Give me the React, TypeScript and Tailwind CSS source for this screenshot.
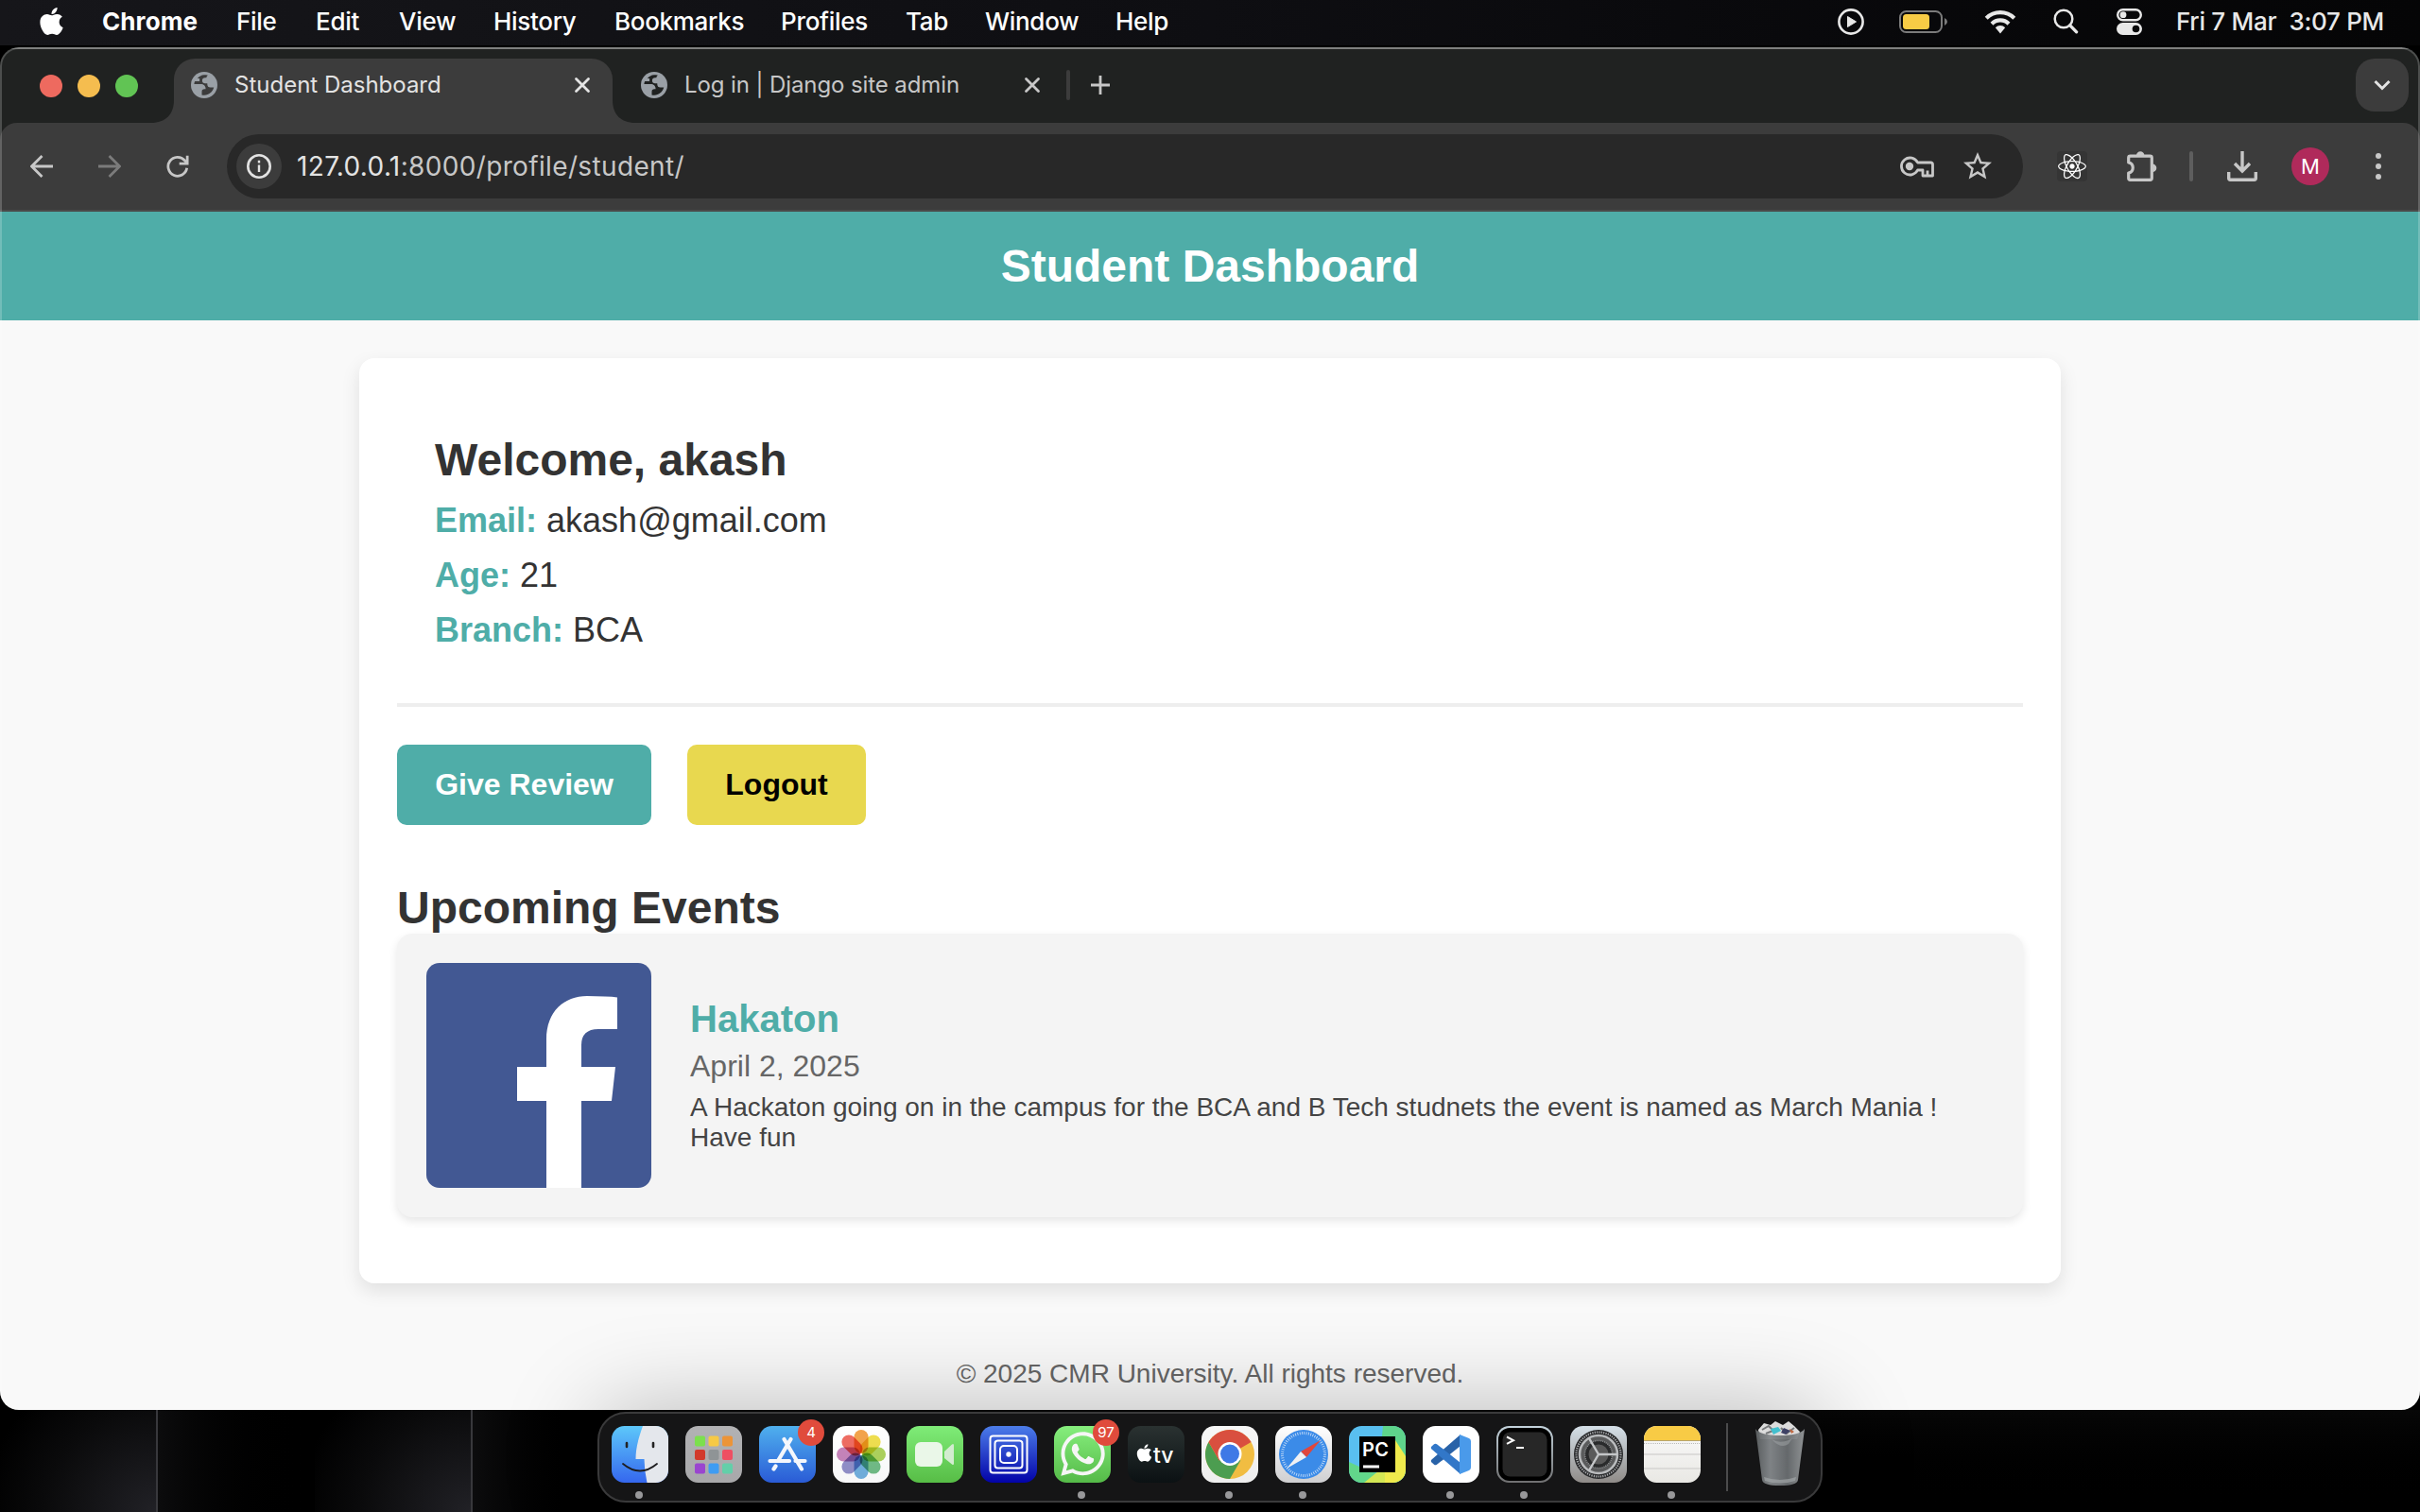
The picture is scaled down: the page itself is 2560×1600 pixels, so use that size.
import { useId } from "react";
import type { ReactNode } from "react";
import { FaApple, FaWhatsapp, FaReact } from "react-icons/fa";
import { MdOutlineStarBorder } from "react-icons/md";

const menus: { label: string; x: string }[] = [
  { label: "File", x: "w-[84px]" },
  { label: "Edit", x: "w-[88px]" },
  { label: "View", x: "w-[100px]" },
  { label: "History", x: "w-[128px]" },
  { label: "Bookmarks", x: "w-[176px]" },
  { label: "Profiles", x: "w-[132px]" },
  { label: "Tab", x: "w-[84px]" },
  { label: "Window", x: "w-[138px]" },
  { label: "Help", x: "w-[100px]" },
];

function MenuBar() {
  return (
    <div className="flex h-12 items-center bg-gradient-to-r from-[#16161a] via-[#0e0e12] to-[#050506] pb-[3px] text-[26px] font-medium tracking-[-0.3px] text-white">
      <div className="flex w-[108px] shrink-0 pl-[38px]">
        <FaApple size={33} />
      </div>
      <div className="w-[142px] shrink-0 font-bold tracking-[0.1px]">Chrome</div>
      {menus.map((m) => (
        <div key={m.label} className={`${m.x} shrink-0 whitespace-nowrap`}>{m.label}</div>
      ))}
      <div className="ml-auto flex items-center pr-[39px] text-[#e8e8e8]">
        <svg className="mr-[37px]" width="28" height="28" viewBox="0 0 28 28" fill="none">
          <circle cx="14" cy="14" r="12.600" stroke="currentColor" strokeWidth="2.600" />
          <path d="M10.500 8.500v11l9-5.500z" fill="currentColor" stroke="currentColor" strokeLinejoin="round" />
        </svg>
        <svg className="mr-[38px]" width="52" height="24" viewBox="0 0 52 24" fill="none">
          <rect x="1" y="1" width="44" height="22" rx="6.500" stroke="#7b7b7b" strokeWidth="2" />
          <rect x="4" y="4" width="28" height="16" rx="3.500" fill="#f8cc45" />
          <path d="M48 8q3 1.500 3 4t-3 4z" fill="#7b7b7b" />
        </svg>
        <svg className="mr-[39px]" width="34" height="26" viewBox="0 0 34 26" fill="none">
          <path d="M2.200 9.200a21 21 0 0 1 29.600 0M8 15.200a12.700 12.700 0 0 1 18 0" stroke="currentColor" strokeWidth="4.200" />
          <path d="M11.800 19.200a7.400 7.400 0 0 1 10.400 0L17 25.500z" fill="currentColor" />
        </svg>
        <svg className="mr-[40px]" width="27" height="27" viewBox="0 0 27 27" fill="none" stroke="currentColor">
          <circle cx="11" cy="11" r="9.300" strokeWidth="2.500" />
          <path d="M17.800 17.800l6.800 7" strokeWidth="3.300" strokeLinecap="round" />
        </svg>
        <svg className="mr-[36px]" width="27" height="28" viewBox="0 0 27 28" fill="none">
          <rect x="1.200" y="1.200" width="24.600" height="11" rx="5.500" stroke="currentColor" strokeWidth="2.400" />
          <circle cx="7" cy="6.700" r="3.400" fill="currentColor" />
          <rect x="0" y="15" width="27" height="13" rx="6.500" fill="currentColor" />
          <circle cx="20.500" cy="21.500" r="3.800" fill="#080809" />
        </svg>
        <div className="w-[219px] whitespace-pre tracking-[-0.3px]">Fri 7 Mar  3:07 PM</div>
      </div>
    </div>
  );
}

function Close({ className }: { className: string }) {
  return (
    <svg className={className} width="18" height="18" viewBox="0 0 18 18" stroke="currentColor" strokeWidth="2.800" strokeLinecap="round">
      <path d="M2.500 2.500l13 13M15.500 2.500l-13 13" />
    </svg>
  );
}

function Globe({ className }: { className: string }) {
  return (
    <svg className={className} width="28" height="28" viewBox="0 0 28 28" fill="none">
      <circle cx="14" cy="14" r="14" fill="#9aa0a6" />
      <path d="M3.400 13h7c3 0 5.100 1.800 5.100 4.500v.8h-1.300c-1.800 0-2.700 1-2.700 2.600v3.600c.8.200 1.700.3 2.500.3 5-.1 9-3.600 10.200-8.300h-3.500c-2.200 0-3.400-1.300-3.400-3.300v-.9h-2.200c-2 0-3.200-1.200-3.200-3 0-1.900 1.200-3 3.200-3h1.300c0-1.300.6-2 1.600-2.500-1.300-.4-2.700-.5-4-.5-3 .2-5.400 1.600-7.200 3.700h2.300v3H4.200c-.5 1-.8 2-.8 3z" className="fill-current" />
    </svg>
  );
}

function TabStrip() {
  return (
    <div className="flex h-[78px] items-end bg-[#202221]">
      <div className="flex h-[78px] w-[160px] shrink-0 items-center gap-4 pl-[42px]">
        <span className="size-6 rounded-full bg-[#ee6a5f]" />
        <span className="size-6 rounded-full bg-[#f5bd4f]" />
        <span className="size-6 rounded-full bg-[#61c454]" />
      </div>
      <svg width="24" height="24" viewBox="0 0 24 24" className="shrink-0 fill-[#3c3c3c]"><path d="M0 24C15 24 24 15 24 0V24z" /></svg>
      <div className="flex h-[68px] w-[464px] shrink-0 items-center rounded-t-[22px] bg-[#3c3c3c] pb-3 pl-[18px] pr-[23px]">
        <Globe className="shrink-0 text-[#3c3c3c]" />
        <span className="ml-[18px] whitespace-nowrap text-[24px] tracking-[0px] text-[#e3e3e3]">Student Dashboard</span>
        <Close className="ml-auto shrink-0 text-[#e3e3e3]" />
      </div>
      <svg width="24" height="24" viewBox="0 0 24 24" className="shrink-0 fill-[#3c3c3c]"><path d="M24 24C9 24 0 15 0 0V24z" /></svg>
      <div className="flex h-[68px] items-center pb-3 text-[#c7c7c7]">
        <Globe className="ml-[6px] shrink-0 text-[#202221]" />
        <span className="ml-[18px] w-[359px] whitespace-nowrap text-[24px] tracking-[-0.1px]">Log in | Django site admin</span>
        <Close className="shrink-0" />
        <span className="ml-[27px] h-8 w-1 rounded-full bg-[#3c3c3c]" />
        <svg className="ml-[22px]" width="20" height="20" viewBox="0 0 20 20" stroke="currentColor" strokeWidth="2.800"><path d="M10 0v20M0 10h20" /></svg>
      </div>
      <div className="mb-3 ml-auto mr-[12px] flex size-14 items-center justify-center rounded-[20px] bg-[#3c3c3c]">
        <svg width="18" height="12" viewBox="0 0 18 12" fill="none" stroke="#e3e3e3" strokeWidth="3"><path d="M1.500 2l7.500 7.500L16.500 2" /></svg>
      </div>
    </div>
  );
}

function Toolbar() {
  return (
    <div className="bg-[#202221]">
      <div className="flex h-[94px] items-center rounded-t-[18px] border-b-2 border-[#4a4a4a] bg-[#3c3c3c] text-[#c7c7c7]">
        <svg className="ml-8 shrink-0" width="24" height="24" viewBox="0 0 24 24" fill="none" stroke="currentColor" strokeWidth="2.800"><path d="M24 12H2.500M12.500 1L1.500 12l11 11" /></svg>
        <svg className="ml-12 shrink-0 text-[#7b7b7b]" width="24" height="24" viewBox="0 0 24 24" fill="none" stroke="currentColor" strokeWidth="2.800"><path d="M0 12h21.500M11.500 1l11 11-11 11" /></svg>
        <svg className="ml-12 shrink-0" width="24" height="24" viewBox="0 0 26 26" fill="none" stroke="currentColor" strokeWidth="3"><path d="M23.500 15A10.800 10.800 0 1 1 21 6.200L23.500 9" /><path d="M24 .8V10h-9.200" /></svg>
        <div className="ml-10 flex h-[68px] w-[1900px] shrink-0 items-center rounded-full bg-[#282828] pl-[10px]">
          <div className="flex size-12 items-center justify-center rounded-full bg-[#3c3c3c]">
            <svg width="26" height="26" viewBox="0 0 26 26" fill="none" stroke="#e3e3e3"><circle cx="13" cy="13" r="11.700" strokeWidth="2.600" /><path d="M13 11.500v7.500M13 6.800v2.600" strokeWidth="2.400" /></svg>
          </div>
          <div className="ml-4 text-[28px] tracking-[0.35px]"><span className="text-[#e3e3e3]">127.0.0.1</span>:8000/profile/student/</div>
          <svg className="ml-auto mr-[28px]" width="36" height="24" viewBox="0 0 36 24" fill="none" stroke="currentColor" strokeWidth="2.800" strokeLinejoin="round">
            <path d="M18.500 8A9 9 0 1 0 18.500 16H24v6h10.500V10q0-2-2-2zM29 16.500V22" />
            <circle cx="10" cy="12" r="4.200" fill="currentColor" stroke="none" />
          </svg>
          <MdOutlineStarBorder className="mr-[30px] text-[36px]" />
        </div>
        <div className="ml-[36px] flex size-8 shrink-0 items-center justify-center rounded bg-[#353535]">
          <FaReact size={30} className="text-white" />
        </div>
        <svg className="ml-[42px] shrink-0" width="32" height="32" viewBox="0 0 32 32" fill="none">
          <path d="M1.700 7Q1.700 5.200 3.500 5.200H24.500q1.800 0 1.800 1.800V28.500q0 1.800-1.800 1.800H3.500q-1.800 0-1.800-1.800V23a5.600 5.600 0 0 0 0-11z" stroke="currentColor" strokeWidth="3.200" strokeLinejoin="round" />
          <path d="M10 4.500a4.200 4.200 0 0 1 8.400 0zM27 13.500a4.300 4.300 0 0 1 0 8.600z" fill="currentColor" />
        </svg>
        <span className="ml-[34px] h-8 w-1 shrink-0 rounded-full bg-[#5e5e5e]" />
        <svg className="ml-9 shrink-0" width="32" height="32" viewBox="0 0 32 32" fill="none" stroke="currentColor" strokeWidth="3.400"><path d="M16 0v21M8 13l8 8 8-8M1.700 22v6.500q0 1.700 1.700 1.700h25.200q1.700 0 1.700-1.700V22" /></svg>
        <div className="ml-9 flex size-10 shrink-0 items-center justify-center rounded-full bg-[#b02a5b] text-[22px] text-white">M</div>
        <div className="ml-[49px] flex flex-col gap-[5px]">
          <i className="size-1.5 rounded-full bg-[#c7c7c7]" /><i className="size-1.5 rounded-full bg-[#c7c7c7]" /><i className="size-1.5 rounded-full bg-[#c7c7c7]" />
        </div>
      </div>
    </div>
  );
}

function Info({ label, value }: { label: string; value: string }) {
  return (
    <p className="text-[36px] leading-[58px]">
      <strong className="text-[#4fada8]">{label}:</strong> {value}
    </p>
  );
}

function Page() {
  return (
    <div className="flex grow flex-col items-center bg-[#f9f9f9] font-['Liberation_Sans',Arial,sans-serif] text-[#333]">
      <header className="flex h-[115px] w-full items-center justify-center bg-[#4fada8] text-[48px] font-bold text-white">Student Dashboard</header>
      <main className="mt-10 h-[979px] w-[1800px] rounded-[16px] bg-white px-10 shadow-[0_8px_20px_rgba(0,0,0,0.1)]">
        <section className="h-[369px] border-b-4 border-[#eee] px-10 pt-[80px]">
          <h2 className="text-[48px] font-bold leading-[55px]">Welcome, akash</h2>
          <div className="pt-2">
            <Info label="Email" value="akash@gmail.com" />
            <Info label="Age" value="21" />
            <Info label="Branch" value="BCA" />
          </div>
        </section>
        <div className="mt-10 flex gap-[38px] text-[32px] font-bold leading-[37px]">
          <button className="w-[269px] rounded-[10px] bg-[#4fada8] py-6 text-white">Give Review</button>
          <button className="w-[189px] rounded-[10px] bg-[#e8d84f] py-6 text-black">Logout</button>
        </div>
        <h2 className="mt-[60px] text-[48px] font-bold leading-[55px]">Upcoming Events</h2>
        <article className="flex h-[300px] items-center gap-10 rounded-[16px] bg-[#f4f4f4] px-[30px] shadow-[0_4px_10px_rgba(0,0,0,0.1)]">
          <svg className="size-60 shrink-0" viewBox="0 0 240 240">
            <rect x="1" y="1" width="238" height="238" rx="14" fill="#425893" />
            <path d="M128 239V147H97V111h31V82c0-30 19-46 43-46q22 0 32 1.500V71h-20q-18 0-18 17v23h36l-4 36h-32v92z" fill="#fff" />
          </svg>
          <div className="pb-px">
            <h3 className="text-[40px] font-bold leading-[46px] text-[#4fada8]">Hakaton</h3>
            <p className="mt-[9px] text-[32px] leading-[37px] text-[#666]">April 2, 2025</p>
            <p className="mt-[9px] text-[28px] leading-8 text-[#444]">A Hackaton going on in the campus for the BCA and B Tech studnets the event is named as March Mania !<br />Have fun</p>
          </div>
        </article>
      </main>
      <footer className="mt-20 text-[28px] leading-8 text-[#666]">© 2025 CMR University. All rights reserved.</footer>
    </div>
  );
}

function Tile({ from, to, children }: { from: string; to: string; children?: ReactNode }) {
  const id = useId();
  return (
    <svg className="size-[60px]" viewBox="0 0 60 60">
      <defs>
        <linearGradient id={id} x1="0" y1="0" x2="0" y2="1"><stop stopColor={from} /><stop offset="1" stopColor={to} /></linearGradient>
        <clipPath id={id + "c"}><rect width="60" height="60" rx="13.500" /></clipPath>
      </defs>
      <g clipPath={`url(#${id}c)`}>
        <rect width="60" height="60" fill={`url(#${id})`} />
        {children}
      </g>
    </svg>
  );
}

const pads = ["#7ce04d", "#f6c945", "#ec9438", "#d23a2c", "#8f9496", "#ee5063", "#9a45cf", "#3f9cf2", "#63cfa9"];
const petals = ["#f29a38", "#efdc3c", "#a5cf4b", "#63b67a", "#63a8dc", "#8684c4", "#c178b4", "#ee5d52"];

function Trash() {
  return (
    <svg width="54" height="72" viewBox="0 0 54 72">
      <defs><linearGradient id="bin"><stop stopColor="#5d6163" /><stop offset=".3" stopColor="#84888b" /><stop offset=".65" stopColor="#696d70" /><stop offset="1" stopColor="#96999b" /></linearGradient></defs>
      <path d="M4 10L10 3l7 2 5-4 8 4 6-4 6 5 6 6-3 8H6z" fill="#dcdcdc" />
      <path d="M8 10l7-4 6 6M28 8l6 6 8-6M12 14l10-4" stroke="#77797b" strokeWidth="2" fill="none" />
      <path d="M17 9l8-2 3 4-8 4z" fill="#42c0cf" /><path d="M31 8l7 3-5 4-5-2z" fill="#3e4266" /><path d="M37 9l5 3-3 2z" fill="#c0663e" />
      <path d="M1 9q5 7 26 7t26-7L46 63q-1 6-19 6T8 63z" fill="url(#bin)" opacity=".95" />
      <path d="M18 20q10 6 22-1l-4 6q-8 6-18-5z" fill="#a2a6a8" opacity=".5" />
      <path d="M10 60q17 6 34 0l-1 4q-16 5-32 0z" fill="#a9adaf" opacity=".6" />
    </svg>
  );
}

function Icon({ dot, badge, children }: { dot?: boolean; badge?: string; children: ReactNode }) {
  return (
    <div className="relative flex h-[77px] w-[60px] flex-col items-center justify-between">
      {children}
      {dot && <span className="-ml-[2px] size-2 rounded-full bg-[#98989a]" />}
      {badge && <span className="absolute -right-[9px] -top-[7px] flex size-7 items-center justify-center rounded-full bg-[#e04b3c] text-[15px] text-white">{badge}</span>}
    </div>
  );
}

function Dock() {
  return (
    <div className="flex h-24 w-[1296px] items-start rounded-[30px] border-2 border-[#3a3a3b] bg-[#151516] pl-[13px] pt-[13px] shadow-[0_0_100px_rgba(0,0,0,0.28)]">
      <div className="flex gap-[18px]">
        <Icon dot>
          <Tile from="#5dc8fa" to="#3567ee">
            <path d="M33 0C28 14 25.500 24 25.500 35h9q0 12 3 25H60V0z" fill="#e4e7ec" />
            <path d="M16 18v4M44 18v4" stroke="#222" strokeWidth="2.600" strokeLinecap="round" />
            <path d="M12 40q18 15 36 0" fill="none" stroke="#1d1d1f" strokeWidth="1.800" strokeLinecap="round" />
          </Tile>
        </Icon>
        <Icon>
          <Tile from="#b2b2b4" to="#a8a8aa">
            {pads.map((c, i) => <rect key={c} x={10 + (i % 3) * 14.5} y={10.5 + Math.floor(i / 3) * 14.5} width="11" height="11" rx="2" fill={c} />)}
          </Tile>
        </Icon>
        <Icon badge="4">
          <Tile from="#4fb0ee" to="#2a5bd6">
            <g stroke="#f4f7fc" strokeWidth="4.200" strokeLinecap="round"><path d="M33.500 14L20.500 36M17.500 42.500L15.500 45.500M26.500 14L45 45.500M11.500 37H29M38.500 37h10" /><path d="M20 37h12" /></g>
          </Tile>
        </Icon>
        <Icon>
          <Tile from="#ffffff" to="#f7f7f8">
            <g className="[&>*]:mix-blend-multiply">
              {petals.map((c, i) => <rect key={c} x="22.500" y="4" width="15" height="25" rx="7.500" fill={c} opacity=".9" transform={`rotate(${i * 45} 30 30)`} />)}
            </g>
          </Tile>
        </Icon>
        <Icon>
          <Tile from="#7fec78" to="#57bd46">
            <rect x="9" y="17" width="29" height="26" rx="6" fill="#eaf7e8" />
            <path d="M40 27l8-7.500q2-1.500 2 1v19q0 2.500-2 1L40 34z" fill="#d3ecd0" />
          </Tile>
        </Icon>
        <Icon>
          <Tile from="#4c7de9" to="#0202a8">
            <g fill="none" stroke="#fff" strokeWidth="2"><rect x="10.500" y="10.500" width="39" height="39" rx="3" /><rect x="15.500" y="15.500" width="29" height="29" rx="3" /><rect x="21" y="21" width="18" height="18" rx="4" /></g>
            <circle cx="30" cy="30" r="2.700" fill="#fff" />
          </Tile>
        </Icon>
        <Icon dot badge="97">
          <Tile from="#86ee7d" to="#55ba48"><FaWhatsapp x="4" y="3" width="53" height="53" size={53} color="#f6f6f6" /></Tile>
        </Icon>
        <Icon>
          <Tile from="#2a3231" to="#0b1113">
            <FaApple x="7" y="18" size={21} color="#fff" />
            <text x="27" y="39" fontSize="23" fontWeight="500" fill="#fff" fontFamily="Inter, sans-serif">tv</text>
          </Tile>
        </Icon>
        <Icon dot>
          <Tile from="#f7f7f7" to="#eeeeee">
            <circle cx="30" cy="30" r="26" fill="#f1bd42" />
            <path d="M30 30L7.500 17A26 26 0 0 1 52.500 17z" fill="#d94f3f" />
            <path d="M7.500 17A26 26 0 0 0 30 56L41.300 36.500 30 30 18.700 36.500z" fill="#4c9d50" />
            <path d="M7.500 17L18.700 36.500 30 30V17z" fill="#d94f3f" />
            <circle cx="30" cy="29.500" r="12.500" fill="#fff" /><circle cx="30" cy="29.500" r="10" fill="#3f79e6" />
          </Tile>
        </Icon>
        <Icon dot>
          <Tile from="#ffffff" to="#cfcfd1">
            <circle cx="30" cy="30" r="26" fill="#3b8be8" />
            <circle cx="30" cy="30" r="22.500" fill="none" stroke="#cfe2f8" strokeWidth="3" strokeDasharray=".8 1.550" />
            <path d="M48 15L27 27l6 6z" fill="#e0463c" /><path d="M12 45l21-12-6-6z" fill="#f0f1f3" />
          </Tile>
        </Icon>
        <Icon>
          <Tile from="#59bff0" to="#59bff0">
            <path d="M36 0h24v60H30z" fill="#5ed48b" /><path d="M49 15l11 17v28H14l20-12z" fill="#efea4c" /><path d="M0 38l22 10 12 3-16 9H0z" fill="#62d68a" /><path d="M16 60l16-13h6v13z" fill="#d3e755" />
            <rect x="11" y="11" width="38" height="38" />
            <text x="14" y="31.500" fontSize="20" fontWeight="600" fill="#fff" fontFamily="Inter, sans-serif" textLength="28">PC</text>
            <rect x="15" y="41.500" width="17" height="3" fill="#fff" />
          </Tile>
        </Icon>
        <Icon dot>
          <Tile from="#ffffff" to="#ffffff">
            <path d="M40 9L9.500 35.500q-1.500 1.500 0 3l2.500 2.300q1.300 1 3 0L40 21z" fill="#2862a8" />
            <path d="M40 51L9.500 24.500q-1.500-1.500 0-3l2.500-2.300q1.300-1 3 0L40 39z" fill="#3277c8" />
            <path d="M39 9l10 4q2 1 2 3v28q0 2-2 3l-10 4z" fill="#4a9aea" />
          </Tile>
        </Icon>
        <Icon dot>
          <Tile from="#c4d3dc" to="#6f6f70">
            <rect x="2" y="2" width="56" height="56" rx="12" fill="#000" /><rect x="6.500" y="6.500" width="47" height="47" rx="8" fill="#272727" />
            <path d="M11 11.500l7 3.700-7 3.700M21 23h8" stroke="#fff" strokeWidth="2" fill="none" />
          </Tile>
        </Icon>
        <Icon>
          <Tile from="#d5e0e8" to="#8f8b88">
            <circle cx="30" cy="30" r="26" fill="#28292b" />
            <circle cx="30" cy="30" r="23.500" fill="none" stroke="#a9abad" strokeWidth="2.200" strokeDasharray="1.200 1.200" />
            <circle cx="30" cy="30" r="20" fill="#5a5b5c" stroke="#b9bbbd" strokeWidth="2.600" />
            <circle cx="30" cy="30" r="12.500" fill="#5a5a5a" stroke="#2a2b2c" strokeWidth="4" />
            <circle cx="30" cy="30" r="14.500" fill="none" stroke="#8d8f91" strokeWidth="1.500" strokeDasharray="1 1" />
            <path d="M30 30h20M30 30L20 13M30 30L20 47" stroke="#c4c6c8" strokeWidth="2.400" />
          </Tile>
        </Icon>
        <Icon dot>
          <Tile from="#fafafa" to="#e9e8e4">
            <rect width="60" height="15" fill="#f8cb45" /><path d="M0 15.500h60" stroke="#b9a56a" />
            <path d="M0 18.500h60" stroke="#b9b9b9" strokeDasharray="1 1" /><path d="M0 30h60M0 45h60" stroke="#d5d4d2" strokeWidth="1.500" />
          </Tile>
        </Icon>
      </div>
      <span className="ml-[27px] mt-[-3px] h-[72px] w-0.5 bg-[#4b4b4c]" />
      <div className="ml-[28px] mt-[-6px]"><Trash /></div>
    </div>
  );
}

export default function App() {
  return (
    <div className="relative flex h-[1600px] w-[2560px] flex-col overflow-hidden bg-black font-[Inter,sans-serif]">
      <MenuBar />
      <div className="relative mt-0.5 flex h-[1442px] shrink-0 flex-col overflow-hidden rounded-[20px] bg-[#202221]">
        <div className="h-0.5 shrink-0 bg-[#5f6160]" />
        <TabStrip />
        <Toolbar />
        <Page />
        <div className="pointer-events-none absolute inset-0 rounded-[20px] border-x-2 border-t-2 border-white/20" />
      </div>
      <div className="flex h-[108px] shrink-0">
        <div className="w-[167px] border-r-2 border-[#38383c] bg-[radial-gradient(110%_160%_at_100%_100%,#212126,#0a0a0b_65%,#000)]" />
        <div className="w-[166px] bg-gradient-to-r from-[#0c0c0d] to-black" />
        <div className="w-[167px] border-r-2 border-[#38383c] bg-[radial-gradient(110%_160%_at_100%_100%,#212126,#0a0a0b_65%,#000)]" />
        <div className="w-[166px] bg-gradient-to-r from-[#0c0c0d] to-black" />
        <div className="grow bg-gradient-to-b from-[#070707] to-black" />
      </div>
      <div className="absolute bottom-[10px] left-[632px]"><Dock /></div>
    </div>
  );
}
